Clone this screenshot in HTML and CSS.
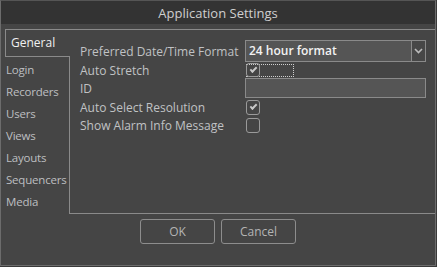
FILE: index.html
```html
<!DOCTYPE html>
<html lang="en">
  <head>
    <meta charset="UTF-8" />
    <title>Application Settings</title>
    <link rel="stylesheet" href="styles.css">
  </head>
  <body>
    <div class="window">
      <div class="titlebar">Application Settings</div>

      <div class="content">
        <div class="tabs">
          <div class="tab active">General</div>
          <div class="tab-list">
            <div class="tab">Login</div>
            <div class="tab">Recorders</div>
            <div class="tab">Users</div>
            <div class="tab">Views</div>
            <div class="tab">Layouts</div>
            <div class="tab">Sequencers</div>
            <div class="tab">Media</div>
          </div>
        </div>

        <div class="panel">
          <div class="settings">
            <label class="label">Preferred Date/Time Format</label>
            <div class="select">
              <span class="select-value">24 hour format</span>
              <span class="select-arrow">
                <svg width="9" height="6" viewBox="0 0 9 6"><path d="M1 1l3.5 3.5L8 1" fill="none" stroke="#bbb" stroke-width="1.6"/></svg>
              </span>
            </div>

            <label class="label">Auto Stretch</label>
            <div class="check-cell">
              <span class="focus-ring"><span class="checkbox checked"></span></span>
            </div>

            <label class="label">ID</label>
            <div class="input-cell"><input class="text-input" type="text" value="" /></div>

            <label class="label">Auto Select Resolution</label>
            <div class="check-cell"><span class="checkbox checked"></span></div>

            <label class="label">Show Alarm Info Message</label>
            <div class="check-cell"><span class="checkbox"></span></div>
          </div>
        </div>
      </div>

      <div class="buttons">
        <button class="btn">OK</button>
        <button class="btn">Cancel</button>
      </div>
    </div>
  </body>
</html>
```

FILE: styles.css
```css
* {
  box-sizing: border-box;
  margin: 0;
  padding: 0;
}

html,
body {
  width: 437px;
  height: 267px;
  overflow: hidden;
  background-color: #3a3a3a;
}

body {
  font-family: "Open Sans", "Noto Sans", sans-serif;
  font-size: 12px;
  color: #c0c2c4;
}

.window {
  width: 436px;
  height: 266px;
  border: 1px solid #6c6c6c;
  border-top-color: #555;
  background-color: #454545;
  display: flex;
  flex-direction: column;
}

.titlebar {
  height: 23px;
  flex-shrink: 0;
  background-color: #333333;
  color: #cfcfcf;
  font-size: 13px;
  display: flex;
  align-items: center;
  justify-content: center;
}

.content {
  display: flex;
  padding: 5px 0 0 4px;
  height: 190px;
}

/* left tab column */
.tabs {
  width: 65px;
  display: flex;
  flex-direction: column;
}

.tab {
  height: 22px;
  line-height: 22px;
  padding-left: 1px;
  color: #bdbfc1;
  font-size: 11.5px;
  white-space: nowrap;
  letter-spacing: -0.2px;
}

.tab.active {
  height: 28px;
  line-height: 26px;
  padding-left: 5px;
  color: #f0f0f0;
  font-size: 12px;
  letter-spacing: 0;
  border: 1px solid #8a8a8a;
  border-right: none;
}

.tab-list {
  flex-grow: 1;
  border-right: 1px solid #8a8a8a;
  padding-top: 2px;
}

/* main settings panel */
.panel {
  flex-grow: 1;
  border-top: 1px solid #8a8a8a;
  border-bottom: 1px solid #8a8a8a;
  padding: 10px 9px 0 10px;
}

.settings {
  display: grid;
  grid-template-columns: 165px 181px;
  grid-template-rows: 22px 16px 20px 19px 17px;
  align-items: center;
}

.label {
  white-space: nowrap;
  color: #c0c2c4;
}

.select {
  height: 22px;
  display: flex;
  border: 1px solid #8a8a8a;
  background-color: #555555;
}

.select-value {
  flex-grow: 1;
  padding-left: 3px;
  line-height: 20px;
  font-size: 12px;
  font-weight: 600;
  color: #f2f2f2;
  border-right: 1px solid #8a8a8a;
}

.select-arrow {
  width: 13px;
  display: flex;
  align-items: center;
  justify-content: center;
  background-color: #474747;
}

.check-cell {
  display: flex;
  align-items: center;
  padding-left: 1px;
}

.focus-ring {
  display: flex;
  width: 48px;
  height: 13px;
  border: 1px dotted #cfcfcf;
  border-left: none;
  align-items: center;
}

.checkbox {
  display: inline-block;
  width: 14px;
  height: 15px;
  border: 1px solid #9a9a9a;
  border-radius: 3px;
  position: relative;
}

.focus-ring .checkbox {
  height: 14px;
}

.checkbox.checked::after {
  content: "";
  position: absolute;
  left: 3px;
  top: 3px;
  width: 5px;
  height: 2px;
  border-left: 2px solid #c8c8c8;
  border-bottom: 2px solid #c8c8c8;
  transform: rotate(-45deg);
}

.input-cell {
  height: 20px;
}

.text-input {
  width: 181px;
  height: 20px;
  border: 1px solid #8a8a8a;
  background-color: #555555;
  outline: none;
}

/* dialog buttons */
.buttons {
  display: flex;
  justify-content: center;
  gap: 6px;
  padding-top: 5px;
}

.btn {
  width: 75px;
  height: 25px;
  border: 1px solid #8d8d8d;
  border-radius: 3px;
  background-color: #454545;
  color: #b4b4b4;
  font-family: "Open Sans", "Noto Sans", sans-serif;
  font-size: 12px;
}
```
